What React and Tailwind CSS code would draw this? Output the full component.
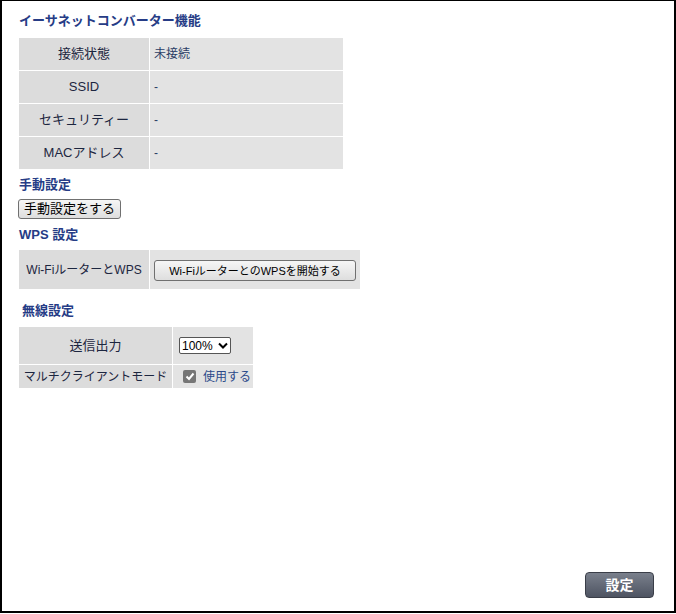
import React from 'react';

const font = { fontFamily: '"Liberation Sans", "Noto Sans CJK JP", sans-serif' };

const statusRows = [
  { label: '接続状態', value: '未接続' },
  { label: 'SSID', value: '-' },
  { label: 'セキュリティー', value: '-' },
  { label: 'MACアドレス', value: '-' },
];

function Heading({ children, className = '' }) {
  return <h2 className={`text-[13px] font-bold text-[#263c86] leading-[16px] ${className}`}>{children}</h2>;
}

function PlainButton({ children, className = '' }) {
  return (
    <button className={`h-[20px] px-[5px] text-[13px] leading-[16px] text-black whitespace-nowrap bg-gradient-to-b from-[#f6f6f6] to-[#dedede] border border-[#707070] rounded-[3px] ${className}`}>
      {children}
    </button>
  );
}

export default function App() {
  return (
    <div style={font} className="w-[676px] h-[614px] bg-white">
      <div className="w-full h-[613px] border-l-2 border-r-2 border-t border-b-2 border-black flex flex-col">
        <div className="pl-[17px] pt-[12px]">
          <Heading>イーサネットコンバーター機能</Heading>

          {/* status table */}
          <table className="mt-[8px] border-separate border-spacing-[1px] -ml-px">
            <tbody>
              {statusRows.map((r) => (
                <tr key={r.label}>
                  <td className="w-[130px] h-[32px] bg-[#dcdcdc] text-center text-[13px] text-[#1c2640]">{r.label}</td>
                  <td className="w-[193px] h-[32px] bg-[#e3e3e3] pl-[4px] text-[12px] text-[#2c3e66]">{r.value}</td>
                </tr>
              ))}
            </tbody>
          </table>

          <Heading className="mt-[7px]">手動設定</Heading>
          <PlainButton className="mt-[6px] -ml-px">手動設定をする</PlainButton>

          <Heading className="mt-[7px]">WPS 設定</Heading>
          <table className="mt-[6px] border-separate border-spacing-[1px] -ml-px">
            <tbody>
              <tr>
                <td className="w-[130px] h-[39px] bg-[#dcdcdc] text-center text-[12px] text-[#1c2640] whitespace-nowrap">Wi-FiルーターとWPS</td>
                <td className="w-[210px] h-[39px] bg-[#e3e3e3] pl-[4px]">
                  <PlainButton className="h-[21px] !text-[11px] w-[202px] !px-0">Wi-FiルーターとのWPSを開始する</PlainButton>
                </td>
              </tr>
            </tbody>
          </table>

          <Heading className="mt-[13px] ml-[3px]">無線設定</Heading>
          <table className="mt-[7px] border-separate border-spacing-[1px] -ml-px">
            <tbody>
              <tr>
                <td className="w-[153px] h-[37px] bg-[#dcdcdc] text-center text-[13px] text-[#1c2640]">送信出力</td>
                <td className="w-[80px] h-[37px] bg-[#e3e3e3] pl-[6px]">
                  <div className="w-[52px] h-[17px] bg-white border border-[#555] rounded-[2px] flex items-center justify-between px-[2px] text-[12px] text-black leading-none">
                    <span>100%</span>
                    <svg width="10" height="7" viewBox="0 0 10 7">
                      <path d="M1 1.5 L5 5.5 L9 1.5" fill="none" stroke="#000" strokeWidth="2" />
                    </svg>
                  </div>
                </td>
              </tr>
              <tr>
                <td className="h-[23px] bg-[#dcdcdc] text-center text-[12px] text-[#1c2640] whitespace-nowrap">マルチクライアントモード</td>
                <td className="h-[23px] bg-[#e3e3e3] pl-[10px]">
                  <div className="flex items-center gap-[7px]">
                    <span className="w-[13px] h-[13px] rounded-[2px] bg-[#767676] flex items-center justify-center">
                      <svg width="10" height="9" viewBox="0 0 10 9">
                        <path d="M1.5 4.5 L4 7 L8.5 1.5" fill="none" stroke="#fff" strokeWidth="2" />
                      </svg>
                    </span>
                    <span className="text-[12px] text-[#2c4a8a]">使用する</span>
                  </div>
                </td>
              </tr>
            </tbody>
          </table>
        </div>

        <div className="flex-1" />

        <div className="flex justify-end pr-[20px] pb-[13px]">
          <button className="w-[69px] h-[26px] rounded-[4px] border border-[#3a3e48] bg-gradient-to-b from-[#7a808c] to-[#4e5462] text-white text-[14px] font-bold">
            設定
          </button>
        </div>
      </div>
    </div>
  );
}
